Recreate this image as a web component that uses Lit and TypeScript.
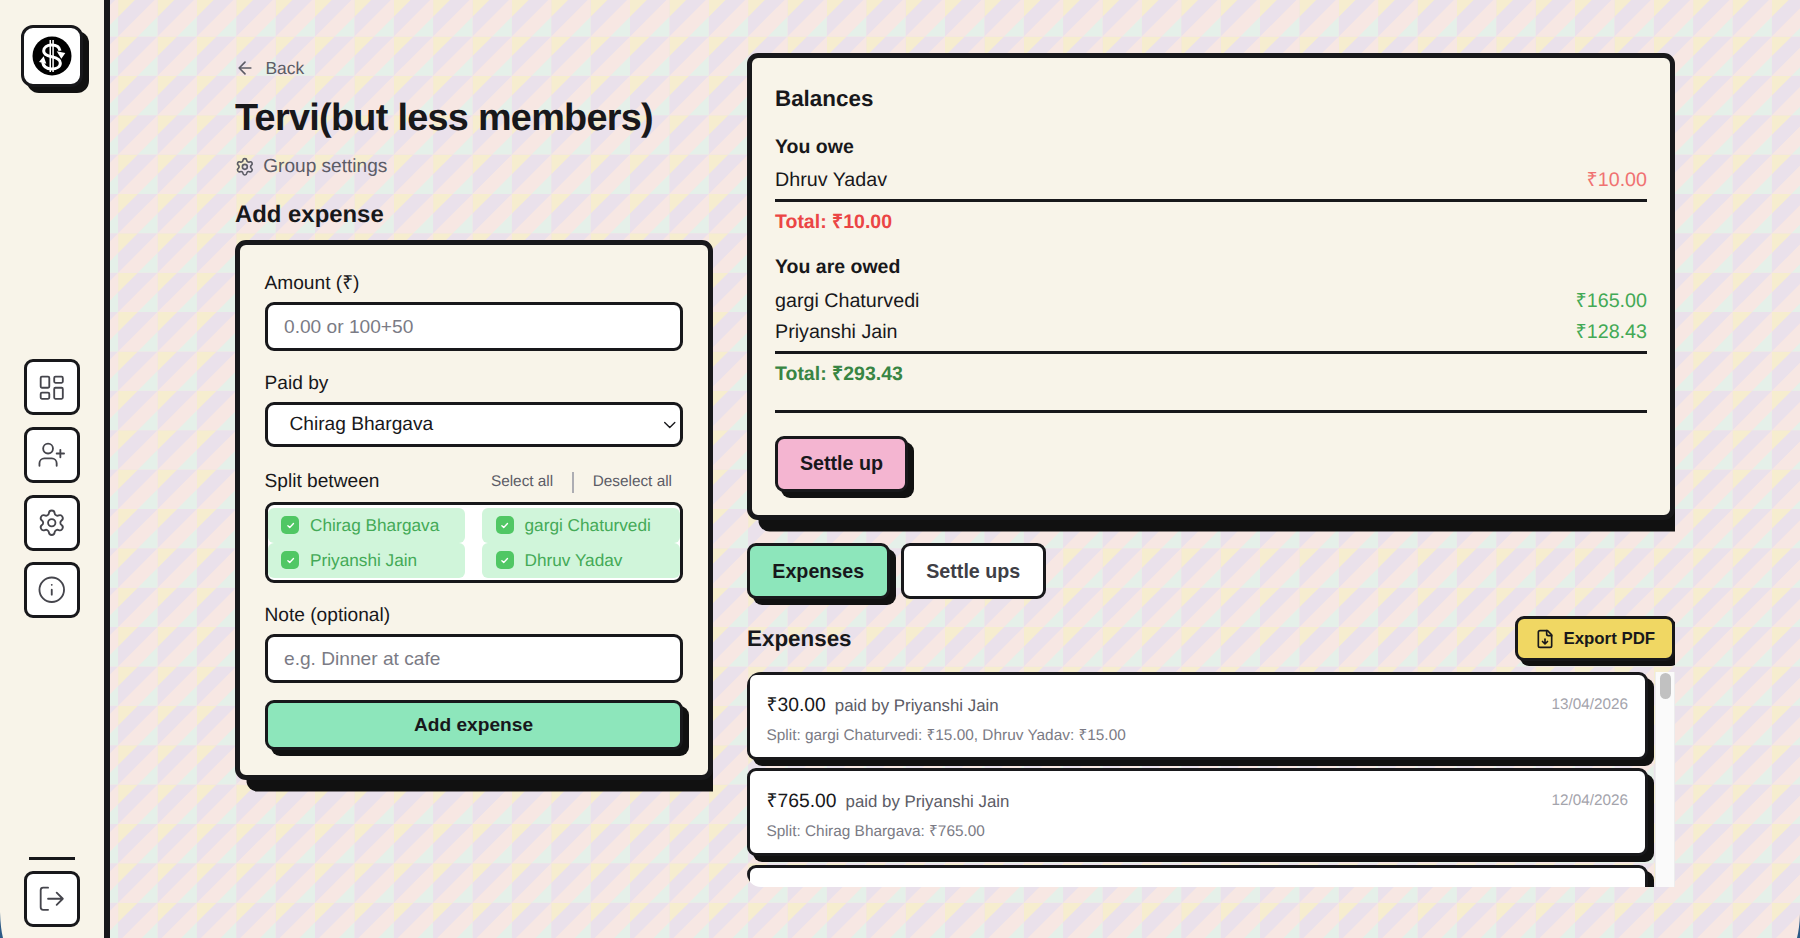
import { LitElement, html, css, svg, nothing, TemplateResult } from "lit";
import { customElement, property } from "lit/decorators.js";

const ICONS: Record<string, TemplateResult> = {
  dashboard: svg`<rect x="3" y="3" width="7" height="9" rx="1"/><rect x="14" y="3" width="7" height="5" rx="1"/><rect x="14" y="12" width="7" height="9" rx="1"/><rect x="3" y="16" width="7" height="5" rx="1"/>`,
  userPlus: svg`<path d="M16 21v-2a4 4 0 0 0-4-4H6a4 4 0 0 0-4 4v2"/><circle cx="9" cy="7" r="4"/><path d="M19 8v6M22 11h-6"/>`,
  settings: svg`<path d="M9.671 4.136a2.34 2.34 0 0 1 4.659 0 2.34 2.34 0 0 0 3.319 1.915 2.34 2.34 0 0 1 2.33 4.033 2.34 2.34 0 0 0 0 3.831 2.34 2.34 0 0 1-2.33 4.033 2.34 2.34 0 0 0-3.319 1.915 2.34 2.34 0 0 1-4.659 0 2.34 2.34 0 0 0-3.32-1.915 2.34 2.34 0 0 1-2.33-4.033 2.34 2.34 0 0 0 0-3.831A2.34 2.34 0 0 1 6.35 6.051a2.34 2.34 0 0 0 3.319-1.915"/><circle cx="12" cy="12" r="3"/>`,
  info: svg`<circle cx="12" cy="12" r="10"/><path d="M12 16v-4M12 8h.01"/>`,
  logout: svg`<path d="m16 17 5-5-5-5M21 12H9M9 21H5a2 2 0 0 1-2-2V5a2 2 0 0 1 2-2h4"/>`,
  back: svg`<path d="m12 19-7-7 7-7M19 12H5"/>`,
  fileDown: svg`<path d="M15 2H6a2 2 0 0 0-2 2v16a2 2 0 0 0 2 2h12a2 2 0 0 0 2-2V7Z"/><path d="M14 2v4a2 2 0 0 0 2 2h4M12 18v-6M9 15l3 3 3-3"/>`,
  chevron: svg`<path d="m3 8 9 9 9-9"/>`,
  check: svg`<path d="m5 12.500 5 5 10-11"/>`,
};

@customElement("line-icon")
class LineIcon extends LitElement {
  @property() name = "";
  @property({ type: Number }) stroke = 2;
  static styles = css`
    :host { display: block; flex: none; width: var(--icon, 24px); height: var(--icon, 24px); }
    svg { display: block; width: 100%; height: 100%; overflow: visible; }
  `;
  render() {
    return html`<svg viewBox="0 0 24 24" fill="none" stroke="currentColor" stroke-width=${this.stroke}
      stroke-linecap="round" stroke-linejoin="round">${ICONS[this.name]}</svg>`;
  }
}

// Page backdrop: square tiles, each cut diagonally into four colour bands.
const TILE = 39.375;
const COLS = 46;
const ROWS = 25;
function bands() {
  let yellow = "";
  let pink = "";
  let mint = "";
  const h = TILE / 2;
  for (let r = 0; r < ROWS; r++) {
    for (let c = 0; c < COLS; c++) {
      const x = c * TILE;
      const y = r * TILE - 2.95;
      yellow += `M${x} ${y}h${h}l${-h} ${h}z`;
      pink += `M${x + TILE} ${y}v${TILE}h${-TILE}z`;
      mint += `M${x + TILE} ${y + h}v${h}h${-h}z`;
    }
  }
  return { yellow, pink, mint };
}
const BANDS = bands();

const MEMBERS = ["Chirag Bhargava", "gargi Chaturvedi", "Priyanshi Jain", "Dhruv Yadav"];
const OWE = [{ who: "Dhruv Yadav", amount: "₹10.00" }];
const OWED = [
  { who: "gargi Chaturvedi", amount: "₹165.00" },
  { who: "Priyanshi Jain", amount: "₹128.43" },
];
const EXPENSES = [
  { amount: "₹30.00", by: "Priyanshi Jain", split: "gargi Chaturvedi: ₹15.00, Dhruv Yadav: ₹15.00", date: "13/04/2026" },
  { amount: "₹765.00", by: "Priyanshi Jain", split: "Chirag Bhargava: ₹765.00", date: "12/04/2026" },
  null,
];

@customElement("app-root")
class AppRoot extends LitElement {
  static styles = css`
    * { box-sizing: border-box; }
    :host {
      --ink: #18181b;
      --shadow: #111111;
      --cream: #f8f4e9;
      --mint: #8de6bb;
      position: relative;
      z-index: 0;
      display: flex;
      width: 1800px;
      height: 938px;
      overflow: hidden;
      font-family: "Liberation Sans", Arial, sans-serif;
      font-size: 19.690px;
      text-rendering: geometricPrecision;
      color: var(--ink);
      background: #eae1eb;
    }
    .backdrop { position: absolute; inset: 0; z-index: -1; width: 1800px; height: 938px; }
    h1, h2, h3, p { margin: 0; }
    button, input { font: inherit; color: inherit; margin: 0; }

    .side {
      flex: none;
      width: 110px;
      height: 100%;
      padding: 25px 0 11.500px;
      background: var(--cream);
      border-right: 6px solid var(--ink);
      display: flex;
      flex-direction: column;
      align-items: center;
      justify-content: space-between;
    }
    .logo {
      width: 62px;
      height: 62px;
      border: 3px solid var(--ink);
      border-radius: 12px;
      background: #fff;
      box-shadow: 6px 6px 0 var(--shadow);
      display: grid;
      place-items: center;
    }
    .logo svg { width: 40px; height: 40px; display: block; }
    .nav { display: grid; gap: 11.600px; padding-top: 34px; }
    .navbtn {
      --icon: 29.500px;
      width: 56px;
      height: 56px;
      padding: 0;
      border: 3px solid var(--ink);
      border-radius: 9px;
      background: #fff;
      color: #45454c;
      display: grid;
      place-items: center;
    }
    .exit { display: grid; justify-items: center; gap: 11px; }
    .rule { width: 46px; height: 3px; background: var(--ink); }

    .page {
      flex: 1;
      padding: 53px 125px 0;
      display: grid;
      grid-template-columns: 478px 928px;
      gap: 34px;
      align-items: start;
    }
    .col { overflow-x: clip; overflow-y: visible; display: flex; flex-direction: column; }
    .link { display: flex; align-items: center; color: #5c5c66; }
    .back { --icon: 20px; gap: 10.500px; height: 30px; font-size: 17.4px; }
    .title { margin-top: 12px; font-size: 37.8px; line-height: 46px; letter-spacing: -0.7px; white-space: nowrap; }
    .settings { --icon: 19.700px; gap: 8.500px; margin-top: 13px; height: 25px; font-size: 19.1px; }
    .section { margin-top: 21px; font-size: 23.9px; line-height: 30px; }

    .card {
      border: 5px solid var(--ink);
      border-radius: 11px;
      background: var(--cream);
      box-shadow: 11.5px 11.5px 0 var(--shadow);
    }
    .form { margin-top: 10px; height: 539.500px; padding: 24px 25.500px 0 24.500px; font-size: 19.15px; }
    .label { display: block; line-height: 29px; }
    .field {
      display: flex;
      align-items: center;
      width: 100%;
      height: 49px;
      margin-top: 4px;
      padding: 0 16.500px;
      border: 3px solid var(--ink);
      border-radius: 9px;
      background: #fff;
      outline: none;
    }
    .field::placeholder { color: #7b7b85; opacity: 1; }
    .gap { margin-top: 18px; }
    .select { --icon: 13.500px; height: 45px; padding: 0 3.500px 0 22px; justify-content: space-between; color: #18181b; }
    .split { display: flex; align-items: center; margin-top: 21px; height: 28px; }
    .bulk { margin-left: auto; display: flex; align-items: center; font-size: 15.35px; color: #5c5c66; padding-right: 10.500px; }
    .bar { width: 2px; height: 21px; margin: 0 18.500px 0 19px; background: #adadb3; }
    .checks {
      height: 81px;
      margin-top: 6px;
      padding: 2.500px 0;
      border: 3px solid var(--ink);
      border-radius: 9px;
      background: #fff;
      display: grid;
      grid-template-columns: 1fr 1fr;
      column-gap: 17px;
      overflow: hidden;
    }
    .check {
      display: flex;
      align-items: center;
      gap: 11px;
      padding-left: 13.500px;
      border-radius: 6px;
      background: #d0f5da;
      color: #44aa57;
      font-size: 17.23px;
      white-space: nowrap;
    }
    .box {
      --icon: 9px;
      width: 18px;
      height: 18px;
      border-radius: 5px;
      background: #50c764;
      color: #fff;
      display: grid;
      place-items: center;
    }
    .btn {
      border: 3px solid var(--ink);
      border-radius: 9px;
      box-shadow: 6px 6px 0 var(--shadow);
      font-weight: 700;
      padding: 0;
      display: flex;
      align-items: center;
      justify-content: center;
    }
    .add { width: 100%; height: 49.500px; margin-top: 17px; background: var(--mint); font-size: 19.15px; }

    .balances { height: 467px; padding: 0 23px; display: flex; flex-direction: column; }
    .h2 { font-size: 22.4px; line-height: 30px; }
    .balances .h2 { margin-top: 26px; }
    .h3 { font-size: 19.5px; line-height: 28px; margin-top: 18.500px; }
    .row { display: flex; justify-content: space-between; line-height: 31px; }
    .h3 + .row { margin-top: 4.500px; }
    .owe { color: #f07272; }
    .owed { color: #43a955; }
    .line { flex: none; height: 3px; background: var(--ink); margin-top: 3.200px; }
    .total { font-size: 19.5px; line-height: 28px; font-weight: 700; margin-top: 6.300px; }
    .total.neg { color: #eb4545; }
    .total.pos { color: #388543; }
    .total + .line { margin-top: 21.700px; }
    .total.neg + .h3 { margin-top: 17px; }
    .settle { width: 133px; height: 56px; margin-top: 22.800px; background: #f4b5d1; font-size: 19.69px; }

    .tabs { display: flex; gap: 11.500px; margin-top: 23px; }
    .tab { height: 56px; font-size: 19.69px; }
    .tab.on { width: 142.500px; background: var(--mint); }
    .tab.off { width: 144.500px; background: #fff; color: #3f3f46; box-shadow: none; }
    .head { display: flex; justify-content: space-between; align-items: center; margin-top: 17px; height: 45px; }
    .export { --icon: 20px; width: 160px; height: 45px; gap: 8.500px; background: #f0d763; font-size: 16.85px; box-shadow: 5px 5px 0 var(--shadow); }
    .list {
      height: 215px;
      margin-top: 11px;
      display: flex;
      justify-content: space-between;
      border-radius: 14px 0 0 14px;
      overflow: hidden;
    }
    .items { width: 901px; display: grid; grid-auto-rows: 88px; gap: 8.300px; height: 215px; }
    .item {
      border: 3px solid var(--ink);
      border-radius: 9px;
      background: #fff;
      box-shadow: 6px 6px 0 var(--shadow);
      padding: 17px 17px 0 16.500px;
    }
    .meta { display: flex; align-items: baseline; line-height: 28px; font-size: 19.3px; }
    .by { margin-left: 9px; font-size: 16.85px; color: #5c5c66; }
    .date { margin-left: auto; font-size: 15.3px; color: #a4a4ac; position: relative; top: -2px; }
    .detail { font-size: 15.4px; line-height: 24px; margin-top: 3px; color: #7b7b85; }
    .scroll { width: 20px; background: #fafafa; border-left: 1px solid #ededed; border-right: 1px solid #ededed; padding: 1px 3px 0 4px; }
    .thumb { height: 26px; border-radius: 6px; background: #c1c1c1; }
    .corners { position: absolute; left: 0; bottom: 0; width: 1800px; height: 30px; pointer-events: none; }
  `;

  private row(r: { who: string; amount: string }, cls: string) {
    return html`<div class="row"><span>${r.who}</span><span class=${cls}>${r.amount}</span></div>`;
  }

  private nav(name: string) {
    return html`<button class="navbtn"><line-icon name=${name} stroke="1.5"></line-icon></button>`;
  }

  render() {
    return html`
      <svg class="backdrop" viewBox="0 0 1800 938">
        <path d=${BANDS.yellow} fill="#f6edcf"/>
        <path d=${BANDS.pink} fill="#f7e7e3"/>
        <path d=${BANDS.mint} fill="#e5f0e9"/>
      </svg>
      <aside class="side">
        <div class="logo">
          <svg viewBox="0 0 120 120" fill="none">
            <circle cx="60" cy="60" r="58.5" fill="#000"/>
            <path d="M59 12v96" stroke="#fff" stroke-width="13"/>
            <path d="M59 12v96" stroke="#000" stroke-width="4"/>
            <path d="M84 44C82 32 72 27 59 27c-14 0-24 7-24 18 0 10 9 14 24 17 16 3 26 8 26 19 0 11-11 18-26 18-14 0-25-7-27-20" stroke="#fff" stroke-width="9"/>
            <path d="M74 46l26 5-12 17zM21 78l14-17 8 22z" fill="#fff"/>
          </svg>
        </div>
        <nav class="nav">${["dashboard", "userPlus", "settings", "info"].map((n) => this.nav(n))}</nav>
        <div class="exit"><div class="rule"></div>${this.nav("logout")}</div>
      </aside>

      <main class="page">
        <section class="col">
          <div class="link back"><line-icon name="back"></line-icon>Back</div>
          <h1 class="title">Tervi(but less members)</h1>
          <div class="link settings"><line-icon name="settings"></line-icon>Group settings</div>
          <h2 class="section">Add expense</h2>
          <div class="card form">
            <label class="label">Amount (₹)</label>
            <input class="field" placeholder="0.00 or 100+50" />
            <label class="label gap">Paid by</label>
            <div class="field select"><span>Chirag Bhargava</span><line-icon name="chevron" stroke="2.4"></line-icon></div>
            <div class="split">
              <span>Split between</span>
              <div class="bulk"><span>Select all</span><i class="bar"></i><span>Deselect all</span></div>
            </div>
            <div class="checks">
              ${MEMBERS.map((m) => html`<div class="check"><span class="box"><line-icon name="check" stroke="3.6"></line-icon></span>${m}</div>`)}
            </div>
            <label class="label gap">Note (optional)</label>
            <input class="field" placeholder="e.g. Dinner at cafe" />
            <button class="btn add">Add expense</button>
          </div>
        </section>

        <section class="col">
          <div class="card balances">
            <h2 class="h2">Balances</h2>
            <h3 class="h3">You owe</h3>
            ${OWE.map((r) => this.row(r, "owe"))}
            <div class="line"></div>
            <p class="total neg">Total: ₹10.00</p>
            <h3 class="h3">You are owed</h3>
            ${OWED.map((r) => this.row(r, "owed"))}
            <div class="line"></div>
            <p class="total pos">Total: ₹293.43</p>
            <div class="line"></div>
            <button class="btn settle">Settle up</button>
          </div>
          <div class="tabs">
            <button class="btn tab on">Expenses</button>
            <button class="btn tab off">Settle ups</button>
          </div>
          <div class="head">
            <h2 class="h2">Expenses</h2>
            <button class="btn export"><line-icon name="fileDown"></line-icon>Export PDF</button>
          </div>
          <div class="list">
            <div class="items">
              ${EXPENSES.map((e) => html`<article class="item">${e
                ? html`<div class="meta"><span>${e.amount}</span><span class="by">paid by ${e.by}</span><span class="date">${e.date}</span></div>
                    <div class="detail">Split: ${e.split}</div>`
                : nothing}</article>`)}
            </div>
            <div class="scroll"><div class="thumb"></div></div>
          </div>
        </section>
      </main>
      <svg class="corners" viewBox="0 0 1800 30" fill="#2c5a86">
        <path d="M0 4Q0.500 20 3 30H0ZM1800 6Q1799.500 20 1797 30H1800Z"/>
      </svg>
    `;
  }
}
